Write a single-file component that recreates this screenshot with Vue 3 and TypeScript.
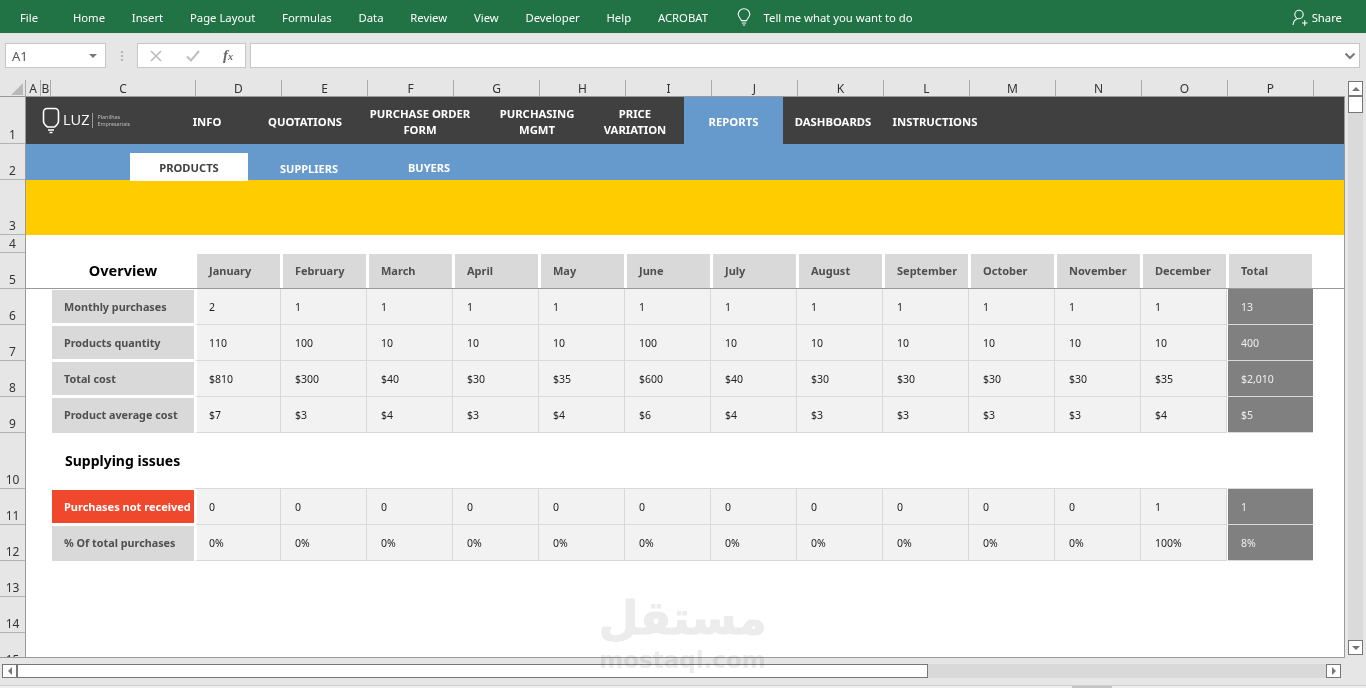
<script setup lang="ts">
const tabs = ['Home', 'Insert', 'Page Layout', 'Formulas', 'Data', 'Review', 'View', 'Developer', 'Help', 'ACROBAT']
const letters = ['A', 'B', 'C', 'D', 'E', 'F', 'G', 'H', 'I', 'J', 'K', 'L', 'M', 'N', 'O', 'P']
const rowNums: { n: string; cls: string }[] = [
  { n: '1', cls: 'h47' }, { n: '2', cls: 'h36' }, { n: '3', cls: 'h55' }, { n: '4', cls: 'h18' },
  { n: '5', cls: 'h36' }, { n: '6', cls: 'h36' }, { n: '7', cls: 'h36' }, { n: '8', cls: 'h36' },
  { n: '9', cls: 'h36' }, { n: '10', cls: 'h56' }, { n: '11', cls: 'h36' }, { n: '12', cls: 'h36' },
  { n: '13', cls: 'h36' }, { n: '14', cls: 'h36' }, { n: '15', cls: 'h36' }
]
const months = ['January', 'February', 'March', 'April', 'May', 'June', 'July', 'August', 'September', 'October', 'November', 'December', 'Total']
const overview = [
  { label: 'Monthly purchases', vals: ['2', '1', '1', '1', '1', '1', '1', '1', '1', '1', '1', '1'], total: '13' },
  { label: 'Products quantity', vals: ['110', '100', '10', '10', '10', '100', '10', '10', '10', '10', '10', '10'], total: '400' },
  { label: 'Total cost', vals: ['$810', '$300', '$40', '$30', '$35', '$600', '$40', '$30', '$30', '$30', '$30', '$35'], total: '$2,010' },
  { label: 'Product average cost', vals: ['$7', '$3', '$4', '$3', '$4', '$6', '$4', '$3', '$3', '$3', '$3', '$4'], total: '$5' }
]
const issues = [
  { label: 'Purchases not received', vals: ['0', '0', '0', '0', '0', '0', '0', '0', '0', '0', '0', '1'], total: '1' },
  { label: '% Of total purchases', vals: ['0%', '0%', '0%', '0%', '0%', '0%', '0%', '0%', '0%', '0%', '0%', '100%'], total: '8%' }
]
</script>

<template>
  <div class="app">
    <header class="ribbon">
      <span class="rtab file">File</span>
      <span v-for="t in tabs" :key="t" class="rtab">{{ t }}</span>
      <svg class="bulb" width="16" height="18" viewBox="0 0 16 18" fill="none" stroke="#fff" stroke-width="1.1">
        <path d="M5.4 12.6C5 10.5 2.2 9.4 2.2 6.3a5.8 5.6 0 0 1 11.6 0c0 3.100-2.800 4.200-3.200 6.300z" />
        <path d="M5.800 15h4.400M6.800 17h2.400" />
      </svg>
      <span class="tell">Tell me what you want to do</span>
      <span class="share">
        <svg width="16" height="17" viewBox="0 0 16 17" fill="none" stroke="#fff" stroke-width="1.1">
          <circle cx="7" cy="5.500" r="4.200" />
          <path d="M1 16c.4-3.500 2.600-6 5-6.500M10 14h5.500M12.700 11.200v5.600" />
        </svg>
        Share
      </span>
    </header>

    <section class="fbar">
      <div class="namebox">
        <span>A1</span>
        <i class="caret"></i>
      </div>
      <div class="dots"><b></b><b></b><b></b></div>
      <div class="fxbox">
        <svg width="12" height="12" viewBox="0 0 12 12" fill="none" stroke="#bdbdbd" stroke-width="1.600"><path d="M1 1l10 10M11 1L1 11" /></svg>
        <svg width="14" height="12" viewBox="0 0 14 12" fill="none" stroke="#bdbdbd" stroke-width="2"><path d="M1 6.500l4 4L13 1" /></svg>
        <em class="fx">f<small>x</small></em>
      </div>
      <div class="finput">
        <svg width="12" height="8" viewBox="0 0 12 8" fill="none" stroke="#777" stroke-width="2"><path d="M1.500 1.500L6 6l4.500-4.500" /></svg>
      </div>
    </section>

    <section class="workbook">
      <div class="sheetarea">
        <div class="colhead">
          <div class="corner"><i></i></div>
          <div class="letters cols">
            <span v-for="l in letters" :key="l" class="letter">{{ l }}</span>
          </div>
        </div>
        <div class="sheetrow">
          <div class="rowhead">
            <div v-for="r in rowNums" :key="r.n" class="rownum" :class="r.cls">{{ r.n }}</div>
          </div>
          <div class="grid">
            <nav class="nav h47">
              <div class="logo">
                <svg width="18" height="27" viewBox="0 0 18 27" fill="none" stroke="#fff" stroke-width="1.600">
                  <path d="M5 1.500h8a3.500 3.500 0 0 1 3.500 3.500v9c0 3-2 4.500-4 6H5.500c-2-1.500-4-3-4-6V5A3.500 3.500 0 0 1 5 1.500z" />
                  <path d="M6 23h6M7.500 25.500h3" />
                </svg>
                <span class="luz">LUZ</span>
                <i class="logodiv"></i>
                <span class="logosub">Planilhas<br />Empresariais</span>
              </div>
              <a class="nv w88">INFO</a>
              <a class="nv w108">QUOTATIONS</a>
              <a class="nv w122">PURCHASE ORDER<br />FORM</a>
              <a class="nv w112">PURCHASING<br />MGMT</a>
              <a class="nv w84">PRICE<br />VARIATION</a>
              <a class="nv w99 active">REPORTS</a>
              <a class="nv w100">DASHBOARDS</a>
              <a class="nv w104">INSTRUCTIONS</a>
            </nav>
            <div class="subnav h36">
              <a class="stab on">PRODUCTS</a>
              <a class="stab low">SUPPLIERS</a>
              <a class="stab">BUYERS</a>
            </div>
            <div class="yellow h55"></div>
            <div class="h18"></div>

            <div class="cols hdrrow h36">
              <div class="lead"></div>
              <div class="title ctr">Overview</div>
              <div v-for="m in months" :key="m" class="mon"><span>{{ m }}</span></div>
            </div>

            <div v-for="(r, i) in overview" :key="r.label" class="cols h36">
              <div class="lead"></div>
              <div class="lab" :class="{ tall: i === overview.length - 1 }">{{ r.label }}</div>
              <div v-for="(v, j) in r.vals" :key="j" class="val" :class="{ first: j === 0 }">{{ v }}</div>
              <div class="tot">{{ r.total }}</div>
            </div>

            <div class="cols h56">
              <div class="lead"></div>
              <div class="title sup">Supplying issues</div>
            </div>

            <div v-for="(r, i) in issues" :key="r.label" class="cols h36" :class="{ toprule: i === 0 }">
              <div class="lead"></div>
              <div class="lab" :class="{ red: i === 0, tall: i === 1 }">{{ r.label }}</div>
              <div v-for="(v, j) in r.vals" :key="j" class="val" :class="{ first: j === 0 }">{{ v }}</div>
              <div class="tot">{{ r.total }}</div>
            </div>
          </div>
        </div>
      </div>

      <aside class="vscroll">
        <button class="sbtn"><i class="tri up"></i></button>
        <div class="vtrack">
          <div class="vthumb"></div>
        </div>
        <button class="sbtn"><i class="tri down"></i></button>
      </aside>
    </section>

    <section class="hscroll">
      <button class="sbtn"><i class="tri left"></i></button>
      <div class="hthumb"></div>
      <div class="htrack"></div>
      <button class="sbtn"><i class="tri right"></i></button>
    </section>

    <footer class="status"><i></i></footer>

    <div class="mark">
      <div class="mark-ar" dir="rtl">مستقل</div>
      <div class="mark-en">mostaql.com</div>
    </div>
  </div>
</template>

<style>
html, body { margin: 0; padding: 0; background: #e6e6e6; overflow: hidden; }
</style>

<style scoped>
.app { position: relative; width: 1366px; height: 688px; overflow: hidden; background: #e6e6e6; font-family: "Noto Sans", "Open Sans", sans-serif; color: #222; }
.ribbon { height: 33px; background: #217346; color: #fff; display: flex; align-items: center; padding-left: 20px; padding-top: 1px; font-size: 11.3px; gap: 26.8px; box-sizing: border-box; }
.rtab { white-space: nowrap; }
.file { margin-right: 8px; }
.bulb { margin-left: 1px; margin-right: -15px; }
.tell { white-space: nowrap; }
.share { margin-left: auto; margin-right: 24px; display: flex; align-items: center; gap: 4px; }

.fbar { height: 47px; box-sizing: border-box; padding: 10px 6px 12px 5px; display: flex; align-items: stretch; }
.namebox { width: 101px; box-sizing: border-box; background: #fff; border: 1px solid #c6c6c6; display: flex; align-items: center; justify-content: space-between; padding: 0 8px 0 6px; font-size: 13px; color: #555; }
.caret { width: 0; height: 0; border-left: 4px solid transparent; border-right: 4px solid transparent; border-top: 4px solid #777; }
.dots { width: 31px; display: flex; flex-direction: column; align-items: center; justify-content: center; gap: 2px; }
.dots b { width: 2px; height: 2px; background: #b5b5b5; }
.fxbox { width: 109px; box-sizing: border-box; background: #fff; border: 1px solid #c6c6c6; display: flex; align-items: center; padding-left: 12px; gap: 24px; }
.fx { font-family: "Liberation Serif", serif; font-size: 15px; color: #666; font-weight: 700; margin-left: -1px; }
.fx small { font-size: 10px; }
.finput { flex: 1; margin-left: 4px; background: #fff; border: 1px solid #c6c6c6; display: flex; align-items: center; justify-content: flex-end; padding-right: 3px; }

.workbook { height: 578px; display: flex; }
.sheetarea { width: 1345px; height: 578px; display: flex; flex-direction: column; }
.colhead { height: 16px; display: flex; }
.corner { width: 25px; position: relative; flex: none; }
.corner i { position: absolute; right: 2px; bottom: 1px; width: 0; height: 0; border-left: 12px solid transparent; border-bottom: 12px solid #b9b9b9; }
.letters { display: grid; width: 1319px; border-left: 1px solid #a9a9a9; box-sizing: border-box; grid-template-columns: 15px 10px 145px repeat(13, 86px) 31px; }
.letter { font-size: 12px; line-height: 17px; text-align: center; color: #333; border-right: 1px solid #ababab; box-sizing: border-box; height: 16px; }

.sheetrow { display: flex; height: 562px; overflow: hidden; border-bottom: 1px solid #9a9a9a; border-top: 1px solid #9a9a9a; box-sizing: border-box; }
.rowhead { width: 25px; flex: none; }
.rownum { box-sizing: border-box; border-bottom: 1px solid #b4b4b4; font-size: 12px; color: #333; text-align: center; display: flex; align-items: flex-end; justify-content: center; line-height: 16px; }
.grid { flex: 1; background: #fff; border-left: 1px solid #9a9a9a; border-right: 1px solid #9a9a9a; overflow: hidden; }
.h47 { height: 47px; } .h36 { height: 36px; } .h55 { height: 55px; } .h18 { height: 18px; } .h56 { height: 56px; }
.grid .cols { display: grid; grid-template-columns: 25px 144px repeat(13, 86px) 31px; }
.grid .cols .lead { grid-column: 1; }

.nav { background: #404040; display: flex; align-items: stretch; color: #fff; }
.logo { width: 137px; flex: none; display: flex; align-items: center; padding-left: 16px; box-sizing: border-box; gap: 3px; }
.luz { font-size: 14.5px; line-height: 1; font-family: "Open Sans", sans-serif; font-weight: 400; }
.logodiv { width: 1px; height: 15px; background: #999; margin: 0 1px 0 0; }
.logosub { font-size: 5.4px; line-height: 7px; color: #bbb; white-space: nowrap; }
.nv { display: flex; align-items: center; justify-content: center; text-align: center; font-size: 11.3px; line-height: 16px; font-weight: 700; white-space: nowrap; flex: none; padding-top: 2px; box-sizing: border-box; }
.w88 { width: 88px; } .w108 { width: 108px; } .w122 { width: 122px; } .w112 { width: 112px; } .w84 { width: 84px; margin-right: 7px; }
.w99 { width: 99px; } .w100 { width: 100px; } .w104 { width: 104px; }
.active { background: #6699cc; }

.subnav { background: #6699cc; display: flex; align-items: flex-start; padding-left: 104px; gap: 2px; }
.stab { width: 118px; height: 28px; margin-top: 9px; flex: none; display: flex; align-items: center; justify-content: center; color: #fff; font-size: 11px; font-weight: 700; position: relative; box-sizing: border-box; }
.stab.on { background: #fff; color: #404040; font-size: 11.2px; }
.stab.low { padding-top: 3px; }
.yellow { background: #ffcc00; }

.hdrrow { border-bottom: 1px solid #999; box-sizing: border-box; }
.title { font-weight: 700; color: #000; font-size: 14px; display: flex; align-items: center; }
.ctr { justify-content: center; font-size: 14.5px; padding-bottom: 1px; }
.sup { grid-column: 2 / span 3; padding-left: 14px; padding-bottom: 2px; }
.mon { padding: 1px 1px 0 2px; box-sizing: border-box; }
.mon span { display: flex; align-items: center; height: 34px; box-sizing: border-box; background: #d9d9d9; padding: 0 0 2px 12px; font-size: 11px; font-weight: 700; color: #4f4f4f; }
.lab { margin: 1px 1px 2px; background: #d9d9d9; display: flex; align-items: center; padding-left: 12px; font-size: 10.8px; font-weight: 700; color: #4f4f4f; white-space: nowrap; }
.lab.tall { margin-bottom: 0; padding-bottom: 2px; }
.lab.red { background: #f0482c; color: #fff; font-size: 11px; }
.val { background: #f2f2f2; border-right: 1px solid #d9d9d9; border-bottom: 1px solid #d9d9d9; box-sizing: border-box; display: flex; align-items: center; padding-left: 14px; font-size: 10.5px; color: #222; }
.val.first { border-left: 2px solid #fff; padding-left: 12px; }
.tot { margin-left: 1px; background: #808080; border-bottom: 1px solid #d9d9d9; display: flex; align-items: center; padding-left: 13px; font-size: 10.5px; color: #eee; box-sizing: border-box; }
.toprule .val, .toprule .tot { box-shadow: 0 -1px 0 #d9d9d9; }

.vscroll { width: 21px; display: flex; flex-direction: column; align-items: flex-start; padding: 1px 0 0 3px; box-sizing: border-box; height: 575px; }
.sbtn { padding: 0; width: 15px; height: 15px; border: 1px solid #777; background: #fff; box-sizing: border-box; display: flex; align-items: center; justify-content: center; flex: none; }
.vtrack { flex: 1; width: 15px; background: #dadada; }
.vthumb { height: 17px; background: #fff; border: 1px solid #777; box-sizing: border-box; }
.tri { width: 0; height: 0; display: block; }
.tri.up { border-left: 4px solid transparent; border-right: 4px solid transparent; border-bottom: 4px solid #777; }
.tri.down { border-left: 4px solid transparent; border-right: 4px solid transparent; border-top: 4px solid #777; }
.tri.left { border-top: 4px solid transparent; border-bottom: 4px solid transparent; border-right: 4px solid #777; }
.tri.right { border-top: 4px solid transparent; border-bottom: 4px solid transparent; border-left: 4px solid #777; }

.hscroll { position: absolute; left: 2px; top: 664px; width: 1339px; height: 14px; display: flex; }
.hscroll .sbtn { height: 14px; }
.hthumb { width: 911px; background: #fff; border: 1px solid #777; box-sizing: border-box; flex: none; }
.htrack { flex: 1; background: #d9d9d9; }
.status { position: absolute; left: 0; right: 0; top: 685px; height: 3px; background: #f0f0f0; border-top: 1px solid #cfcfcf; box-sizing: border-box; }
.status i { position: absolute; left: 1072px; width: 40px; top: 0; height: 2px; background: #c4c4c4; }

.mark { position: absolute; left: 590px; top: 590px; width: 185px; text-align: center; pointer-events: none; color: #ececec; mix-blend-mode: multiply; font-family: "DejaVu Sans", sans-serif; font-weight: 700; }
.mark-ar { font-size: 46px; line-height: 56px; -webkit-text-stroke: 1px #ececec; }
.mark-en { font-size: 23px; line-height: 26px; margin-top: 1px; }
</style>
